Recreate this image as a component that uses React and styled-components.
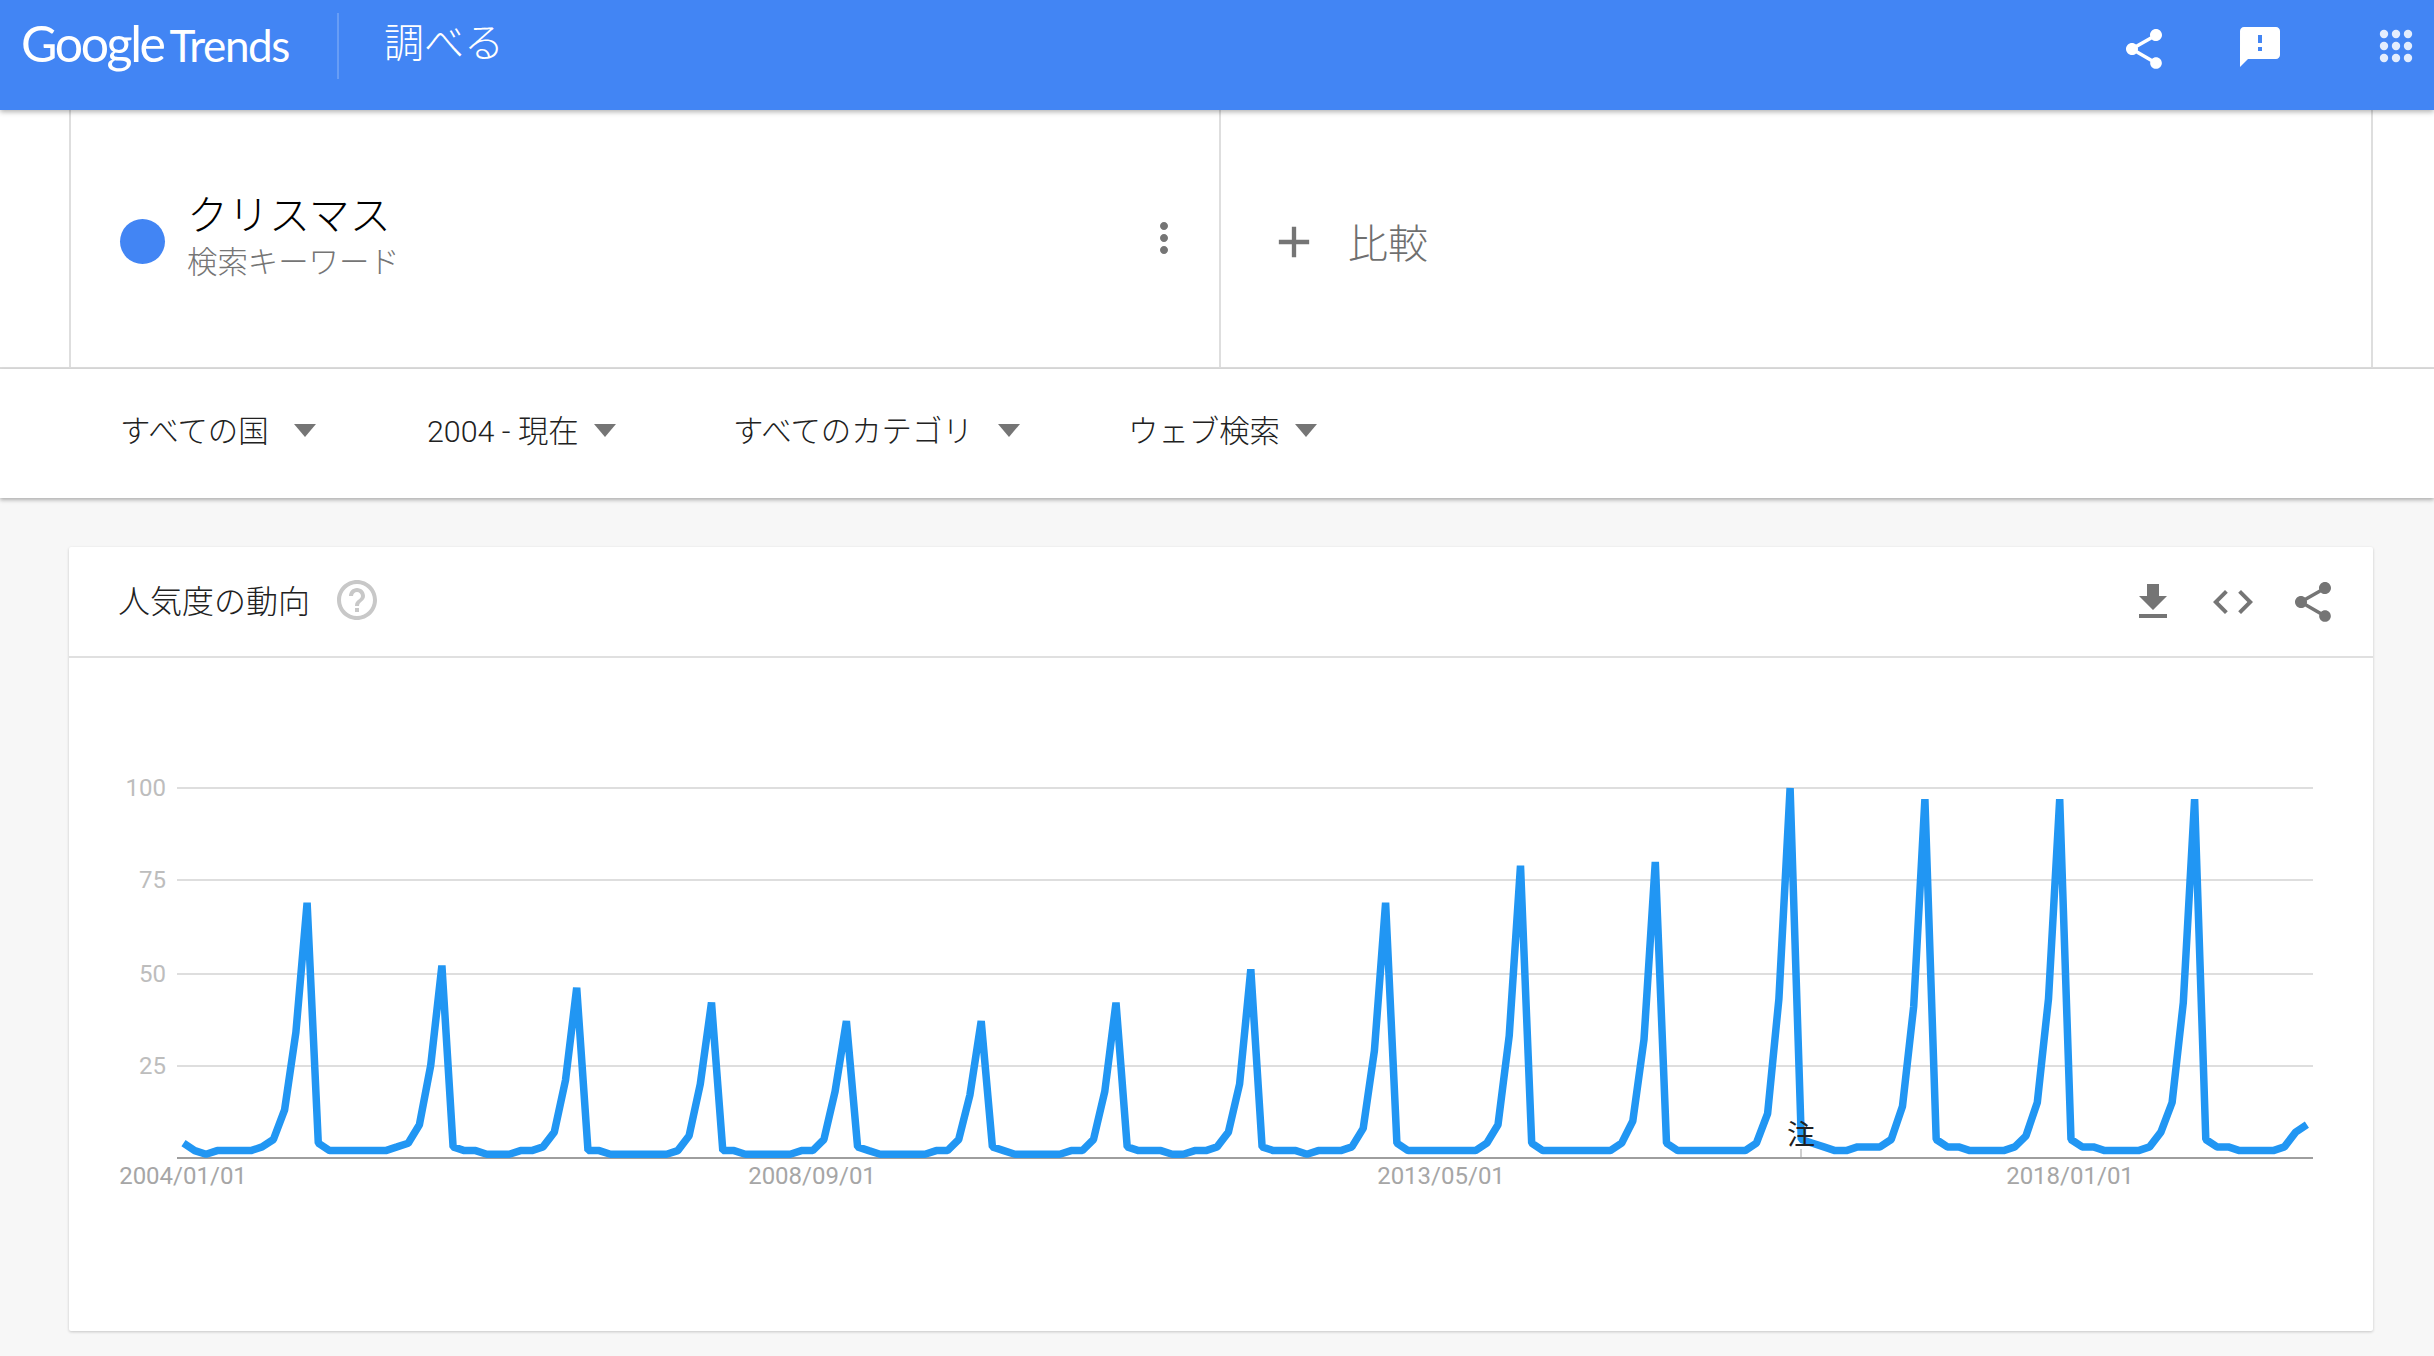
import React from "react";
import styled, { createGlobalStyle } from "styled-components";

const Global = createGlobalStyle`
  html, body { margin: 0; padding: 0; background: #f7f7f7; }
  body { font-family: Roboto, "Noto Sans CJK JP", sans-serif; }
`;

const JP = `Roboto, "Noto Sans CJK JP", sans-serif`;

const Page = styled.div`
  width: 2434px;
  height: 1356px;
  overflow: hidden;
  display: flex;
  flex-direction: column;
  background: #f7f7f7;
`;

const Header = styled.header`
  position: relative;
  z-index: 3;
  height: 110px;
  flex: none;
  background: #4285f4;
  box-shadow: 0 2px 5px rgba(0, 0, 0, 0.3);
  display: flex;
  align-items: flex-start;
  padding: 0 14px 0 21px;
  box-sizing: border-box;
  color: #fff;
`;

const Logo = styled.div`
  width: 318px;
  height: 66px;
  margin-top: 13px;
  border-right: 2px solid rgba(255, 255, 255, 0.2);
  box-sizing: border-box;
  display: flex;
  align-items: baseline;
  line-height: 60px;
  white-space: nowrap;
`;

const LogoGoogle = styled.span`
  font-family: Lato, sans-serif;
  font-size: 50px;
  font-weight: 400;
  letter-spacing: -2.4px;
`;

const LogoTrends = styled.span`
  font-family: Lato, sans-serif;
  font-size: 44px;
  font-weight: 400;
  letter-spacing: -1.4px;
  margin-left: 6px;
`;

const PageTitle = styled.h1`
  margin: 16px 0 0 45px;
  font-family: ${JP};
  font-size: 40px;
  line-height: 56px;
  font-weight: 300;
  flex: 1;
`;

const HeaderIcon = styled.svg`
  width: 48px;
  height: 48px;
  flex: none;
  fill: ${(p) => p.$fill || "#fff"};
  margin: ${(p) => p.$top}px 0 0 ${(p) => p.$left}px;
`;

const SearchRow = styled.section`
  height: 257px;
  flex: none;
  background: #fff;
  border-bottom: 2px solid #dcdcdc;
  box-sizing: content-box;
  display: flex;
  padding: 0 61px 0 69px;
`;

const TermCell = styled.div`
  width: 1152px;
  flex: none;
  box-sizing: border-box;
  border-left: 2px solid #dedede;
  border-right: 2px solid #dedede;
  display: flex;
  align-items: center;
  padding: 0 31px 0 49px;
`;

const Dot = styled.span`
  width: 45px;
  height: 45px;
  border-radius: 50%;
  background: #4285f4;
  flex: none;
  margin-top: 5px;
`;

const TermText = styled.div`
  margin-left: 22px;
  flex: 1;
  display: flex;
  flex-direction: column;
  margin-top: -3px;
`;

const TermName = styled.div`
  font-family: ${JP};
  font-size: 41px;
  line-height: 50px;
  font-weight: 300;
  color: #000;
`;

const TermKind = styled.div`
  font-family: ${JP};
  font-size: 30.4px;
  line-height: 43px;
  font-weight: 300;
  color: #757575;
`;

const MoreIcon = styled.svg`
  width: 48px;
  height: 48px;
  fill: #757575;
  flex: none;
  margin-top: -2px;
`;

const CompareCell = styled.div`
  flex: 1;
  box-sizing: border-box;
  border-right: 2px solid #dedede;
  display: flex;
  align-items: center;
  padding-left: 47px;
  font-family: ${JP};
  font-size: 40px;
  font-weight: 300;
  color: #6f6f6f;
`;

const PlusIcon = styled.svg`
  width: 52px;
  height: 52px;
  fill: #757575;
  flex: none;
  margin: 6px 28px 0 0;
`;

const CompareText = styled.span`
  margin-top: 5px;
`;

const FilterRow = styled.nav`
  position: relative;
  z-index: 2;
  height: 129px;
  flex: none;
  background: #fff;
  box-shadow: 0 2px 4px rgba(0, 0, 0, 0.3);
  display: flex;
  align-items: center;
  padding: 0 0 10px 120px;
  box-sizing: border-box;
`;

const Filter = styled.div`
  width: ${(p) => p.$w}px;
  flex: none;
  display: flex;
  align-items: center;
  font-family: ${JP};
  font-size: 30.4px;
  font-weight: 300;
  color: #212121;
  white-space: nowrap;
`;

const Caret = styled.span`
  width: 0;
  height: 0;
  margin-left: ${(p) => p.$gap}px;
  margin-top: 3px;
  border-left: 11px solid transparent;
  border-right: 11px solid transparent;
  border-top: 13px solid #757575;
`;

const Card = styled.article`
  margin: 49px 61px 0 69px;
  height: 784px;
  flex: none;
  background: #fff;
  border-radius: 2px;
  box-shadow: 0 1px 3px rgba(0, 0, 0, 0.2);
  display: flex;
  flex-direction: column;
`;

const CardHead = styled.div`
  height: 111px;
  flex: none;
  box-sizing: border-box;
  border-bottom: 2px solid #e0e0e0;
  display: flex;
  align-items: center;
  padding: 0 36px 0 49px;
`;

const CardTitle = styled.h2`
  margin: -6px 0 0;
  font-family: ${JP};
  font-size: 32px;
  font-weight: 300;
  color: #212121;
`;

const HelpIcon = styled.svg`
  width: 48px;
  height: 48px;
  flex: none;
  fill: #c8c8c8;
  margin: -3px 0 0 23px;
`;

const HelpSlot = styled.div`
  flex: 1;
  display: flex;
`;

const CardActions = styled.div`
  display: flex;
  gap: 32px;
`;

const ActionIcon = styled.svg`
  width: 48px;
  height: 48px;
  fill: #757575;
`;

const Chart = styled.svg`
  display: block;
  width: 2304px;
  height: 673px;
  flex: none;
`;

const SHARE =
  "M18 16.08c-.76 0-1.44.3-1.96.77L8.91 12.7c.05-.23.09-.46.09-.7s-.04-.47-.09-.7l7.05-4.11c.54.5 1.25.81 2.04.81 1.66 0 3-1.34 3-3s-1.34-3-3-3-3 1.34-3 3c0 .24.04.47.09.7L8.04 9.81C7.5 9.31 6.79 9 6 9c-1.66 0-3 1.34-3 3s1.34 3 3 3c.79 0 1.5-.31 2.04-.81l7.12 4.16c-.05.21-.08.43-.08.65 0 1.61 1.31 2.92 2.92 2.92 1.61 0 2.92-1.31 2.92-2.92s-1.31-2.92-2.92-2.92z";

const DATA = [
  4, 2, 1, 2, 2, 2, 2, 3, 5, 13, 34, 69,
  4, 2, 2, 2, 2, 2, 2, 3, 4, 9, 25, 52,
  3, 2, 2, 1, 1, 1, 2, 2, 3, 7, 21, 46,
  2, 2, 1, 1, 1, 1, 1, 1, 2, 6, 20, 42,
  2, 2, 1, 1, 1, 1, 1, 2, 2, 5, 18, 37,
  3, 2, 1, 1, 1, 1, 1, 2, 2, 5, 17, 37,
  3, 2, 1, 1, 1, 1, 1, 2, 2, 5, 18, 42,
  3, 2, 2, 2, 1, 1, 2, 2, 3, 7, 20, 51,
  3, 2, 2, 2, 1, 2, 2, 2, 3, 8, 29, 69,
  4, 2, 2, 2, 2, 2, 2, 2, 4, 9, 33, 79,
  4, 2, 2, 2, 2, 2, 2, 2, 4, 10, 32, 80,
  4, 2, 2, 2, 2, 2, 2, 2, 4, 12, 43, 100,
  5, 4, 3, 2, 2, 3, 3, 3, 5, 14, 41, 97,
  5, 3, 3, 2, 2, 2, 2, 3, 6, 15, 43, 97,
  5, 3, 3, 2, 2, 2, 2, 3, 7, 15, 42, 97,
  5, 3, 3, 2, 2, 2, 2, 3, 7, 9,
];

const X0 = 183.5;
const STEP = 11.235;
const BASE = 1157;
const UNIT = 3.7;
const points = DATA.map((v, i) => `${(X0 + i * STEP).toFixed(1)},${(BASE - v * UNIT).toFixed(1)}`).join(" ");

const GRID = [
  { y: 787, label: "100" },
  { y: 879, label: "75" },
  { y: 973, label: "50" },
  { y: 1065, label: "25" },
];

const DATES = [
  { x: 183, label: "2004/01/01" },
  { x: 812, label: "2008/09/01" },
  { x: 1441, label: "2013/05/01" },
  { x: 2070, label: "2018/01/01" },
];

const FILTERS = [
  { label: "すべての国", w: 307, gap: 25 },
  { label: "2004 - 現在", w: 306, gap: 15 },
  { label: "すべてのカテゴリ", w: 395, gap: 25 },
  { label: "ウェブ検索", w: 200, gap: 15 },
];

export default function App() {
  return (
    <Page>
      <Global />
      <Header>
        <Logo>
          <LogoGoogle>Google</LogoGoogle>
          <LogoTrends>Trends</LogoTrends>
        </Logo>
        <PageTitle>調べる</PageTitle>
        <HeaderIcon viewBox="0 0 24 24" $top={25} $left={0}>
          <path d={SHARE} />
        </HeaderIcon>
        <HeaderIcon viewBox="0 0 24 24" $top={23} $left={68}>
          <path d="M20 2H4c-1.1 0-1.99.9-1.99 2L2 22l4-4h14c1.1 0 2-.9 2-2V4c0-1.1-.9-2-2-2zm-7 12h-2v-2h2v2zm0-4h-2V6h2v4z" />
        </HeaderIcon>
        <HeaderIcon viewBox="0 0 48 48" $top={22} $left={88} $fill="#e3edfd">
          {[12, 24, 36].map((cy) =>
            [12, 24, 36].map((cx) => <circle key={`${cx}-${cy}`} cx={cx} cy={cy} r="4.2" />)
          )}
        </HeaderIcon>
      </Header>

      <SearchRow>
        <TermCell>
          <Dot />
          <TermText>
            <TermName>クリスマス</TermName>
            <TermKind>検索キーワード</TermKind>
          </TermText>
          <MoreIcon viewBox="0 0 24 24">
            <path d="M12 8c1.1 0 2-.9 2-2s-.9-2-2-2-2 .9-2 2 .9 2 2 2zm0 2c-1.1 0-2 .9-2 2s.9 2 2 2 2-.9 2-2-.9-2-2-2zm0 6c-1.1 0-2 .9-2 2s.9 2 2 2 2-.9 2-2-.9-2-2-2z" />
          </MoreIcon>
        </TermCell>
        <CompareCell>
          <PlusIcon viewBox="0 0 24 24">
            <path d="M19 13h-6v6h-2v-6H5v-2h6V5h2v6h6v2z" />
          </PlusIcon>
          <CompareText>比較</CompareText>
        </CompareCell>
      </SearchRow>

      <FilterRow>
        {FILTERS.map((f) => (
          <Filter key={f.label} $w={f.w}>
            {f.label}
            <Caret $gap={f.gap} />
          </Filter>
        ))}
      </FilterRow>

      <Card>
        <CardHead>
          <CardTitle>人気度の動向</CardTitle>
          <HelpSlot>
            <HelpIcon viewBox="0 0 24 24">
              <path d="M11 18h2v-2h-2v2zm1-16C6.48 2 2 6.48 2 12s4.48 10 10 10 10-4.48 10-10S17.52 2 12 2zm0 18c-4.41 0-8-3.59-8-8s3.59-8 8-8 8 3.59 8 8-3.59 8-8 8zm0-14c-2.21 0-4 1.79-4 4h2c0-1.1.9-2 2-2s2 .9 2 2c0 2-3 1.75-3 5h2c0-2.25 3-2.5 3-5 0-2.21-1.79-4-4-4z" />
            </HelpIcon>
          </HelpSlot>
          <CardActions>
            <ActionIcon viewBox="0 0 24 24">
              <path d="M19 9h-4V3H9v6H5l7 7 7-7zM5 18v2h14v-2H5z" />
            </ActionIcon>
            <ActionIcon viewBox="0 0 24 24">
              <path d="M9.4 16.6L4.8 12l4.6-4.6L8 6l-6 6 6 6 1.4-1.4zm5.2 0l4.6-4.6-4.6-4.6L16 6l6 6-6 6-1.4-1.4z" />
            </ActionIcon>
            <ActionIcon viewBox="0 0 24 24">
              <path d={SHARE} />
            </ActionIcon>
          </CardActions>
        </CardHead>
        <Chart viewBox="69 657 2304 673">
          {GRID.map((g) => (
            <g key={g.label}>
              <line x1="177" x2="2313" y1={g.y} y2={g.y} stroke="#dedede" strokeWidth="2" />
              <text x="166" y={g.y + 8} textAnchor="end" fontFamily="Roboto, sans-serif" fontSize="24" fill="#bdbdbd">
                {g.label}
              </text>
            </g>
          ))}
          <line x1="177" x2="2313" y1="1157" y2="1157" stroke="#9e9e9e" strokeWidth="2" />
          <line x1="1801" x2="1801" y1="1148" y2="1157" stroke="#9e9e9e" strokeWidth="1" />
          {DATES.map((d) => (
            <text key={d.label} x={d.x} y="1183" textAnchor="middle" fontFamily="Roboto, sans-serif" fontSize="24" fill="#a6a6a6">
              {d.label}
            </text>
          ))}
          <polyline points={points} fill="none" stroke="#2196f3" strokeWidth="7.5" strokeLinejoin="bevel" />
          <text x="1801" y="1144" textAnchor="middle" fontFamily={`"Noto Sans CJK JP", sans-serif`} fontSize="28" fontWeight="400" fill="#212121">
            注
          </text>
        </Chart>
      </Card>
    </Page>
  );
}
